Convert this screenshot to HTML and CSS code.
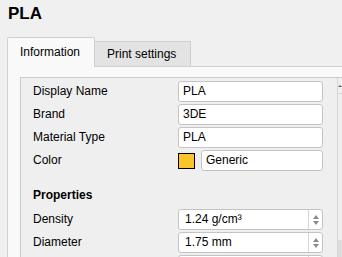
FILE: index.html
```html
<!DOCTYPE html>
<html lang="en">
<head>
    <meta charset="UTF-8">
    <title>Material - PLA</title>
    <link rel="stylesheet" href="styles.css">
</head>
<body>
    <h1 class="title">PLA</h1>

    <div class="tabs">
        <div class="tab active">Information</div>
        <div class="tab">Print settings</div>
    </div>

    <div class="pane">
        <div class="frame">
            <div class="fields">
                <div class="form">
                    <label>Display Name</label>
                    <div class="field">PLA</div>

                    <label>Brand</label>
                    <div class="field">3DE</div>

                    <label>Material Type</label>
                    <div class="field">PLA</div>

                    <label>Color</label>
                    <div class="color-row">
                        <span class="swatch"></span>
                        <div class="field">Generic</div>
                    </div>
                </div>

                <h2 class="section">Properties</h2>

                <div class="form">
                    <label>Density</label>
                    <div class="field spin">
                        <span class="value">1.24 g/cm³</span>
                        <span class="arrows"><i class="up"></i><i class="down"></i></span>
                    </div>

                    <label>Diameter</label>
                    <div class="field spin">
                        <span class="value">1.75 mm</span>
                        <span class="arrows"><i class="up"></i><i class="down"></i></span>
                    </div>

                    <label>&nbsp;</label>
                    <div class="field spin">
                        <span class="value">&nbsp;</span>
                        <span class="arrows"><i class="up"></i><i class="down"></i></span>
                    </div>
                </div>
            </div>

            <div class="scrollbar">
                <div class="scroll-up"><i></i></div>
                <div class="scroll-track"></div>
                <div class="scroll-thumb"></div>
            </div>
        </div>
    </div>
</body>
</html>
```

FILE: styles.css
```css
body {
    font-family: 'Liberation Sans', Arial, sans-serif;
    font-size: 12px;
    background: #f0f0f0;
    color: #000;
    margin: 0;
    padding: 0;
    height: 257px;
    overflow: hidden;
}

.title {
    font-size: 17px;
    font-weight: bold;
    margin: 0;
    padding: 4px 8px 0;
    height: 33px;
    line-height: 20px;
}

.tabs {
    display: flex;
    align-items: flex-end;
    padding-left: 7px;
    height: 29px;
}

.tab {
    box-sizing: border-box;
    height: 25px;
    width: 96px;
    padding-left: 12px;
    line-height: 24px;
    background: #e3e3e3;
    border: 1px solid #d0d0d0;
    border-bottom: none;
    border-left: none;
}

.tab.active {
    height: 30px;
    width: 88px;
    margin-bottom: -1px;
    line-height: 28px;
    background: #f9f9f9;
    border-left: 1px solid #d0d0d0;
    border-radius: 2px 2px 0 0;
    position: relative;
}

.pane {
    box-sizing: border-box;
    margin-left: 7px;
    height: 191px;
    overflow: hidden;
    background: #f9f9f9;
    border-top: 1px solid #d0d0d0;
    border-left: 1px solid #d0d0d0;
    padding: 10px 0 0 12px;
}

.frame {
    display: flex;
    height: 180px;
    overflow: hidden;
    background: #efefef;
    border-top: 1px solid #cacaca;
    border-left: 1px solid #cacaca;
}

.fields {
    width: 302px;
    padding: 3px 0 0 12px;
}

.form {
    display: grid;
    grid-template-columns: 145px 145px;
    row-gap: 2px;
    align-items: center;
}

.form label {
    line-height: 21px;
}

.field {
    box-sizing: border-box;
    height: 21px;
    line-height: 19px;
    padding-left: 4px;
    background: #fff;
    border: 1px solid #c4c4c4;
    border-radius: 3px;
}

.color-row {
    display: flex;
    align-items: center;
    gap: 6px;
}

.color-row .field {
    flex: 1;
}

.swatch {
    box-sizing: border-box;
    width: 17px;
    height: 16px;
    background: #fbc52a;
    border: 1px solid #000;
}

.section {
    font-size: 12px;
    font-weight: bold;
    margin: 16px 0 6px;
    line-height: 16px;
}

.spin {
    display: flex;
    padding-left: 6px;
}

.spin .value {
    flex: 1;
}

.arrows {
    width: 13px;
    border-left: 1px solid #d6d6d6;
    display: flex;
    flex-direction: column;
    align-items: center;
    justify-content: center;
    gap: 2px;
}

.arrows i {
    width: 0;
    height: 0;
    border-left: 3px solid transparent;
    border-right: 3px solid transparent;
}

.arrows .up {
    border-bottom: 4px solid #8a8a8a;
}

.arrows .down {
    border-top: 4px solid #8a8a8a;
}

.scrollbar {
    margin-left: 14px;
    flex: 1;
    border-left: 1px solid #d6d6d6;
    display: flex;
    flex-direction: column;
}

.scroll-up {
    height: 15px;
    border-bottom: 1px solid #d6d6d6;
    display: flex;
    justify-content: center;
    align-items: center;
}

.scroll-up i {
    width: 0;
    height: 0;
    border-left: 2px solid transparent;
    border-right: 2px solid transparent;
    border-bottom: 2px solid #606060;
}

.scroll-track {
    height: 146px;
}

.scroll-thumb {
    flex: 1;
    background: #dcdcdc;
}
```
